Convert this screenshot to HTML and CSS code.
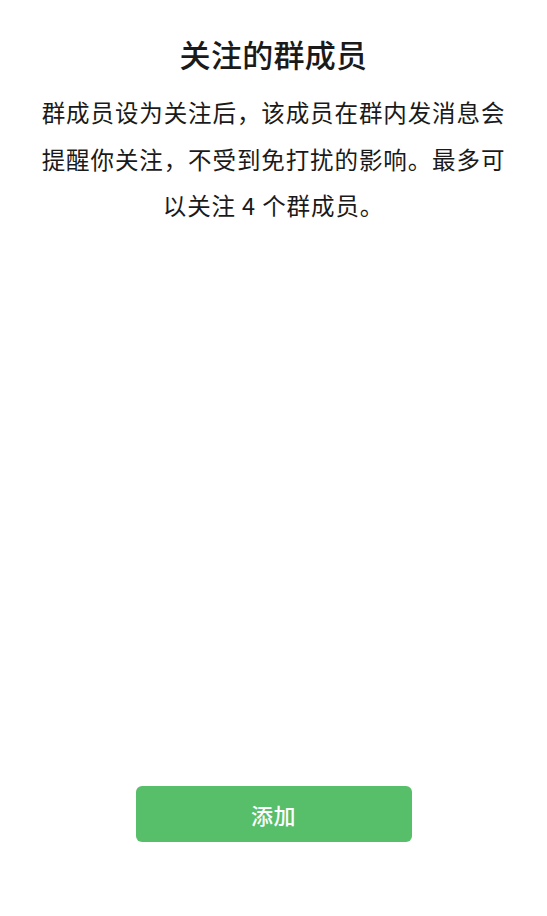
FILE: index.html
```html
<!DOCTYPE html>
<html lang="zh-CN">
<head>
    <meta charset="UTF-8">
    <title>关注的群成员</title>
    <link rel="stylesheet" href="styles.css">
</head>
<body>
    <div class="page">
        <div class="intro">
            <h1>关注的群成员</h1>
            <p class="desc">群成员设为关注后，该成员在群内发消息会提醒你关注，不受到免打扰的影响。最多可以关注 4 个群成员。</p>
        </div>

        <div class="actions">
            <button class="add-button">添加</button>
        </div>
    </div>
</body>
</html>
```

FILE: styles.css
```css
html, body {
    margin: 0;
    padding: 0;
    background: #ffffff;
}

body {
    font-family: "Noto Sans CJK SC", "Noto Sans", sans-serif;
    color: #1a1a1a;
}

.page {
    display: flex;
    flex-direction: column;
    height: 916px;
    box-sizing: border-box;
    padding: 31px 38px 74px;
}

.intro {
    text-align: center;
}

h1 {
    margin: 0;
    font-size: 31px;
    font-weight: 500;
    line-height: 46px;
    letter-spacing: 0.3px;
}

.desc {
    margin: 12px 0 0;
    font-size: 23.5px;
    line-height: 46.5px;
    letter-spacing: 0.9px;
}

.actions {
    margin-top: auto;
    display: flex;
    justify-content: center;
}

.add-button {
    width: 276px;
    height: 56px;
    border: none;
    border-radius: 6px;
    background: #57be6a;
    color: #ffffff;
    font-family: inherit;
    font-size: 22px;
    font-weight: 500;
    letter-spacing: 0.5px;
    cursor: pointer;
}
```
